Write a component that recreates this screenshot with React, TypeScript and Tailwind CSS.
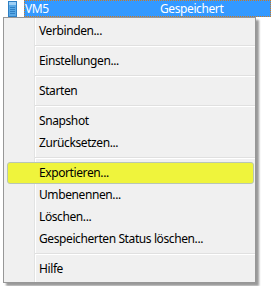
import React from 'react';

type Entry = { label: string; active?: boolean } | 'sep';

const entries: Entry[] = [
  { label: 'Verbinden...' },
  'sep',
  { label: 'Einstellungen...' },
  'sep',
  { label: 'Starten' },
  'sep',
  { label: 'Snapshot' },
  { label: 'Zurücksetzen...' },
  'sep',
  { label: 'Exportieren...', active: true },
  { label: 'Umbenennen...' },
  { label: 'Löschen...' },
  { label: 'Gespeicherten Status löschen...' },
  'sep',
  { label: 'Hilfe' },
];

const VmIcon = () => (
  <svg width="9" height="16" viewBox="0 0 9 16">
    <rect x="0.5" y="0.5" width="8" height="15" fill="#5aa9e6" stroke="#2f7fc4" />
    <rect x="1" y="1" width="7" height="3" fill="#9fd0f5" />
    <line x1="2" y1="6.5" x2="7" y2="6.5" stroke="#2f7fc4" />
    <line x1="2" y1="8.5" x2="7" y2="8.5" stroke="#2f7fc4" />
    <line x1="2" y1="10.5" x2="7" y2="10.5" stroke="#2f7fc4" />
    <line x1="2" y1="12.5" x2="7" y2="12.5" stroke="#2f7fc4" />
  </svg>
);

const MenuItem = ({ label, active }: { label: string; active?: boolean }) => (
  <div
    className={
      'relative h-[22px] flex items-center pl-[31px] ml-[3px] mr-[1px] rounded-[3px] border ' +
      (active ? 'bg-[#eff43c] border-[#b9c6b4]' : 'border-transparent')
    }
  >
    {label}
  </div>
);

const Separator = () => (
  <div className="relative h-[8px] flex flex-col justify-center pl-[31px]">
    <div className="h-px bg-[#e0e0e0]" />
    <div className="h-px bg-white" />
  </div>
);

export default function App() {
  return (
    <div
      className="w-[271px] h-[286px] bg-white overflow-hidden text-[12px] text-black tracking-[-0.4px]"
      style={{ fontFamily: '"Noto Sans", "Open Sans", sans-serif' }}
    >
      {/* selected list row */}
      <div className="h-[17px] flex">
        <div className="w-[24px] flex items-start justify-end pr-[7px] pt-px">
          <VmIcon />
        </div>
        <div className="flex-1 flex items-center bg-[#3399ff] border border-dotted border-[#cc7a22] text-white leading-none">
          <span className="w-[135px]">VM5</span>
          <span>Gespeichert</span>
        </div>
      </div>

      {/* context menu */}
      <div className="relative ml-[3px] w-[253px] border border-[#979797] bg-[#f0f0f0] py-[2px] shadow-[3px_3px_2px_rgba(0,0,0,0.4)]">
        {/* gutter line */}
        <div className="absolute top-0 bottom-0 left-[30px] w-[2px] flex">
          <div className="w-px bg-[#e2e3e3]" />
          <div className="w-px bg-white" />
        </div>
        {entries.map((e, i) =>
          e === 'sep' ? <Separator key={i} /> : <MenuItem key={i} label={e.label} active={e.active} />
        )}
      </div>
    </div>
  );
}
